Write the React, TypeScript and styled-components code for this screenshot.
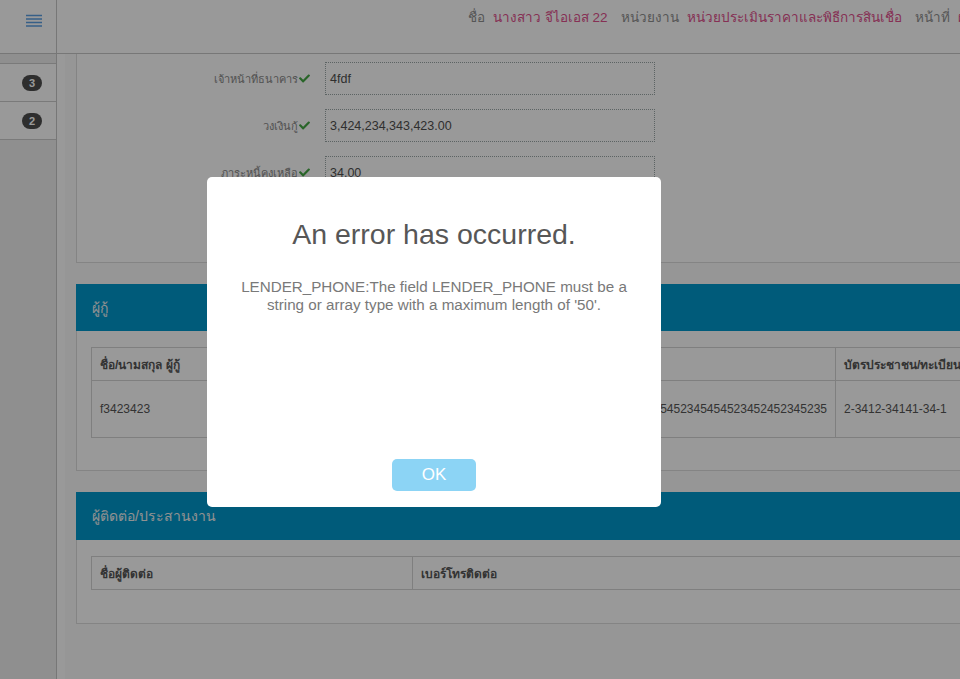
import styled, { createGlobalStyle } from "styled-components";
import { FaCheck } from "react-icons/fa";

const GlobalStyle = createGlobalStyle`
  html, body {
    margin: 0;
    height: 100%;
    overflow: hidden;
  }
  body {
    font-family: "Liberation Sans", "DejaVu Sans", Arial, sans-serif;
    background: #fff;
    color: #555;
  }
  * {
    box-sizing: border-box;
  }
`;

const Layout = styled.div`
  display: flex;
  width: 1240px;
  height: 100vh;
`;

const Sidebar = styled.aside`
  width: 57px;
  flex-shrink: 0;
  background: #eeeeee;
  border-right: 1px solid #c6c6c6;
`;

const SideHead = styled.div`
  height: 54px;
  background: #fff;
  border-bottom: 1px solid #c6c6c6;
  display: flex;
  justify-content: flex-end;
  padding: 14px 14px 0 0;
`;

const SideMenu = styled.ul`
  list-style: none;
  margin: 9px 0 0;
  padding: 0;
  border-top: 1px solid #cccccc;
`;

const SideItem = styled.li`
  height: 38px;
  background: #fff;
  border-bottom: 1px solid #cccccc;
  display: flex;
  align-items: center;
  justify-content: flex-end;
  padding-right: 14px;
`;

const Badge = styled.span`
  min-width: 20px;
  height: 16px;
  border-radius: 8px;
  background: #4d4d4d;
  color: #fff;
  font-size: 11px;
  font-weight: bold;
  line-height: 16px;
  text-align: center;
`;

const Main = styled.main`
  flex: 1;
  min-width: 0;
  display: flex;
  flex-direction: column;
`;

const TopBar = styled.header`
  height: 54px;
  flex-shrink: 0;
  border-bottom: 1px solid #c6c6c6;
  padding: 8px 0 0 411px;
  white-space: nowrap;
  font-size: 13.5px;
  line-height: 20px;
`;

const InfoLabel = styled.span`
  color: #8f8f8f;
  margin-right: 8px;
`;

const InfoValue = styled.span`
  color: #e0508c;
  margin-right: 13px;
`;

const Content = styled.div`
  flex: 1;
  padding-left: 8px;
  background: #fff;
`;

const Inner = styled.div`
  height: 100%;
  background: #fbfbfb;
  padding-left: 11px;
  display: flex;
  flex-direction: column;
  gap: 21px;
`;

const Panel = styled.section<{ $cut?: boolean }>`
  background: #fff;
  border: 1px solid #dddddd;
  ${(p) => (p.$cut ? "border-top: none;" : "")}
`;

const PanelHead = styled.div<{ $h: number }>`
  height: ${(p) => p.$h}px;
  margin: -1px -1px 0;
  background: #0098cc;
  color: #f2f2f2;
  font-size: 14px;
  display: flex;
  align-items: center;
  padding-left: 16px;
`;

const PanelBody = styled.div<{ $pad: string }>`
  padding: ${(p) => p.$pad};
`;

const Form = styled.div`
  display: grid;
  grid-template-columns: 233px 330px;
  column-gap: 15px;
  row-gap: 14px;
`;

const FieldLabel = styled.label`
  display: flex;
  align-items: center;
  justify-content: flex-end;
  gap: 1px;
  font-size: 11px;
  color: #888;

  svg {
    color: #45a845;
    font-size: 11px;
  }
`;

const FieldValue = styled.div`
  height: 33px;
  border: 1px dotted #9aa6a6;
  padding: 0 4px;
  display: flex;
  align-items: center;
  font-size: 12.5px;
  color: #4f4f4f;
`;

const Table = styled.table`
  width: 100%;
  border-collapse: collapse;
  table-layout: fixed;
  font-size: 12px;
`;

const Col = styled.col<{ $w?: number }>`
  ${(p) => (p.$w ? `width: ${p.$w}px;` : "")}
`;

const Th = styled.th`
  border: 1px solid #d4d4d4;
  height: 33px;
  padding: 0 8px;
  text-align: left;
  font-weight: bold;
  color: #555;
  white-space: nowrap;
  overflow: hidden;
`;

const Td = styled.td<{ $rtl?: boolean }>`
  border: 1px solid #d4d4d4;
  height: 57px;
  padding: 0 8px;
  color: #555;
  white-space: nowrap;
  overflow: hidden;
  ${(p) => (p.$rtl ? "direction: rtl; text-align: left;" : "")}
`;

const Overlay = styled.div`
  position: fixed;
  inset: 0;
  background: rgba(0, 0, 0, 0.4);
`;

const Modal = styled.div`
  position: fixed;
  left: 207px;
  top: 177px;
  width: 454px;
  height: 330px;
  background: #fff;
  border-radius: 5px;
  padding: 17px 17px 16px;
  display: flex;
  flex-direction: column;
  align-items: center;
  font-family: "Liberation Sans", Arial, sans-serif;
`;

const ModalTitle = styled.h2`
  margin: 20px 0 0;
  font-size: 28.5px;
  font-weight: normal;
  line-height: 40px;
  color: #575757;
`;

const ModalText = styled.p`
  width: 400px;
  margin: 24px 0 0;
  font-size: 15.2px;
  line-height: 18px;
  text-align: center;
  color: #797979;
`;

const OkButton = styled.button`
  margin-top: auto;
  width: 84px;
  height: 32px;
  border: none;
  border-radius: 5px;
  background: #8cd4f5;
  color: #fff;
  font-family: inherit;
  font-size: 17px;
`;

const Hamburger = () => (
  <svg width="16" height="14" viewBox="0 0 16 14">
    {[1.5, 5, 8.5, 12].map((y) => (
      <rect key={y} x="0" y={y - 0.75} width="16" height="1.5" fill="#5a9fe2" />
    ))}
  </svg>
);

const fields = [
  { label: "เจ้าหน้าที่ธนาคาร", value: "4fdf" },
  { label: "วงเงินกู้", value: "3,424,234,343,423.00" },
  { label: "ภาระหนี้คงเหลือ", value: "34.00" },
];

const longNumber = "2345234523452345234523452345234523452345234523452345452345454523452452345235";

export default function App() {
  return (
    <>
      <GlobalStyle />
      <Layout>
        <Sidebar>
          <SideHead>
            <Hamburger />
          </SideHead>
          <SideMenu>
            <SideItem>
              <Badge>3</Badge>
            </SideItem>
            <SideItem>
              <Badge>2</Badge>
            </SideItem>
          </SideMenu>
        </Sidebar>
        <Main>
          <TopBar>
            <InfoLabel>ชื่อ</InfoLabel>
            <InfoValue>นางสาว จีไอเอส 22</InfoValue>
            <InfoLabel>หน่วยงาน</InfoLabel>
            <InfoValue>หน่วยประเมินราคาและพิธีการสินเชื่อ</InfoValue>
            <InfoLabel>หน้าที่</InfoLabel>
            <InfoValue>ผู้บริหาร</InfoValue>
          </TopBar>
          <Content>
            <Inner>
              <Panel $cut>
                <PanelBody $pad="8px 0 73px">
                  <Form>
                    {fields.map((f) => (
                      <>
                        <FieldLabel key={f.label}>
                          {f.label}
                          <FaCheck />
                        </FieldLabel>
                        <FieldValue key={f.value}>{f.value}</FieldValue>
                      </>
                    ))}
                  </Form>
                </PanelBody>
              </Panel>

              <Panel>
                <PanelHead $h={47}>ผู้กู้</PanelHead>
                <PanelBody $pad="16px 14px 32px">
                  <Table>
                    <colgroup>
                      <Col $w={320} />
                      <Col $w={424} />
                      <Col $w={200} />
                      <Col />
                    </colgroup>
                    <thead>
                      <tr>
                        <Th>ชื่อ/นามสกุล ผู้กู้</Th>
                        <Th>เลขที่บัญชี</Th>
                        <Th>บัตรประชาชน/ทะเบียนนิติบุคคล</Th>
                        <Th>เบอร์โทรศัพท์</Th>
                      </tr>
                    </thead>
                    <tbody>
                      <tr>
                        <Td>f3423423</Td>
                        <Td $rtl>{longNumber}</Td>
                        <Td>2-3412-34141-34-1</Td>
                        <Td>0812345678</Td>
                      </tr>
                    </tbody>
                  </Table>
                </PanelBody>
              </Panel>

              <Panel>
                <PanelHead $h={48}>ผู้ติดต่อ/ประสานงาน</PanelHead>
                <PanelBody $pad="16px 14px 33px">
                  <Table>
                    <colgroup>
                      <Col $w={321} />
                      <Col />
                    </colgroup>
                    <thead>
                      <tr>
                        <Th>ชื่อผู้ติดต่อ</Th>
                        <Th>เบอร์โทรติดต่อ</Th>
                      </tr>
                    </thead>
                  </Table>
                </PanelBody>
              </Panel>
            </Inner>
          </Content>
        </Main>
      </Layout>

      <Overlay />
      <Modal role="alertdialog">
        <ModalTitle>An error has occurred.</ModalTitle>
        <ModalText>
          LENDER_PHONE:The field LENDER_PHONE must be a string or array type with a maximum length of
          '50'.
        </ModalText>
        <OkButton>OK</OkButton>
      </Modal>
    </>
  );
}
